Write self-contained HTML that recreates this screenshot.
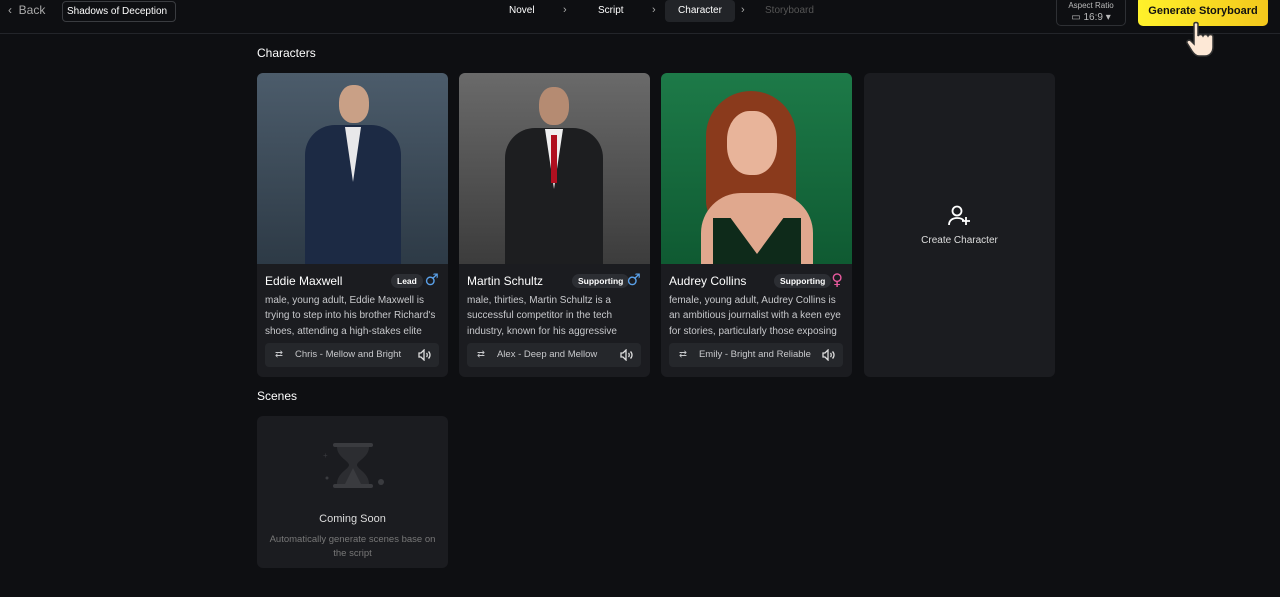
<!DOCTYPE html>
<html><head><meta charset="utf-8"><style>
*{margin:0;padding:0;box-sizing:border-box}
body{width:1280px;height:597px;background:#0e0f12;font-family:"Liberation Sans",sans-serif;color:#fff;position:relative;overflow:hidden}
.top{position:absolute;left:0;top:0;width:1280px;height:34px;border-bottom:1px solid #23252a}
.abs{position:absolute}
.card{position:absolute;top:73px;width:191px;height:304px;background:#1b1c20;border-radius:6px;overflow:hidden}
.img{height:191px;position:relative;overflow:hidden}
.name{position:absolute;left:8px;top:201px;font-size:12px}
.badge{position:absolute;top:201px;height:14px;line-height:14px;font-size:8.5px;font-weight:bold;background:#2c2e33;border-radius:7px;padding:0 6px}
.sex{position:absolute;right:9px;top:197px;font-size:16px;font-family:"DejaVu Sans",sans-serif}
.desc{position:absolute;left:8px;top:220px;width:176px;font-size:10px;line-height:15.3px;color:#c8c9cc}
.voice{position:absolute;left:8px;top:270px;width:174px;height:24px;background:#25272b;border-radius:4px;font-size:9.5px;color:#c8c9cc;line-height:24px}
.spk{position:absolute;right:8px;top:6px}
</style></head><body>
<div class="top"></div>
<div class="abs" style="left:8px;top:3px;font-size:12px;color:#aaa">‹&nbsp; Back</div>
<div class="abs" style="left:62px;top:1px;width:114px;height:21px;border:1px solid #3a3c40;border-radius:4px;font-size:10px;line-height:20px;padding-left:4px">Shadows of Deception</div>
<div class="abs" style="left:509px;top:5px;font-size:10px">Novel</div>
<div class="abs" style="left:563px;top:4px;font-size:11px;color:#aaa">›</div>
<div class="abs" style="left:598px;top:5px;font-size:10px">Script</div>
<div class="abs" style="left:652px;top:4px;font-size:11px;color:#aaa">›</div>
<div class="abs" style="left:665px;top:0;width:70px;height:22px;background:#222428;border-radius:4px;font-size:10px;text-align:center;line-height:21px">Character</div>
<div class="abs" style="left:741px;top:4px;font-size:11px;color:#aaa">›</div>
<div class="abs" style="left:765px;top:5px;font-size:10px;color:#555">Storyboard</div>
<div class="abs" style="left:1056px;top:-4px;width:70px;height:30px;border:1px solid #2e3034;border-radius:5px;text-align:center;font-size:8px;color:#bbb;line-height:12px;padding-top:3px">Aspect Ratio<br><span style="font-size:10px">▭ 16:9 ▾</span></div>
<div class="abs" style="left:1138px;top:-4px;width:130px;height:30px;background:linear-gradient(90deg,#fff12b,#f3c71c);border-radius:5px;color:#111;font-weight:bold;font-size:11px;text-align:center;line-height:30px;padding-top:0">Generate Storyboard</div>
<svg class="abs" style="left:1184px;top:20px" width="40" height="40" viewBox="0 0 40 40"><path d="M10 4c0-2 4-2 4 0v12c1-2 4-2 5 0 1-2 4-2 5 0 1-2 5-2 5 1v10c0 5-3 9-8 9h-6c-3 0-5-2-7-5l-5-8c-1-2 2-4 4-2l3 3z" fill="#fde8d6" stroke="#333" stroke-width="1.5"/></svg>
<div class="abs" style="left:257px;top:46px;font-size:12px">Characters</div>

<div class="card" style="left:257px"><div class="img" style="background:linear-gradient(#4c5c6b,#2d3a46)">
<div class="abs" style="left:82px;top:12px;width:30px;height:38px;border-radius:45%;background:#c9a086"></div>
<div class="abs" style="left:48px;top:52px;width:96px;height:160px;border-radius:30px 30px 0 0;background:#1c2a44"></div>
<div class="abs" style="left:88px;top:54px;width:16px;height:55px;background:#e8e8ea;clip-path:polygon(0 0,100% 0,50% 100%)"></div></div>
<div class="name">Eddie Maxwell</div><div class="badge" style="left:134px">Lead</div><div class="sex" style="color:#5aa0e8">♂</div>
<div class="desc">male, young adult, Eddie Maxwell is trying to step into his brother Richard's shoes, attending a high-stakes elite</div>
<div class="voice"><span style="padding:0 12px 0 10px">⇄</span>Chris - Mellow and Bright<svg class="spk" width="13" height="12" viewBox="0 0 13 12" fill="none" stroke="#ddd" stroke-width="1.3"><path d="M1 4h2l3-3v10l-3-3H1z"/><path d="M8.5 4c1 1 1 3 0 4M10.5 2.5c2 2 2 5 0 7"/></svg></div></div>

<div class="card" style="left:459px"><div class="img" style="background:linear-gradient(#6a6a6a,#3c3c3c)">
<div class="abs" style="left:80px;top:14px;width:30px;height:38px;border-radius:45%;background:#b58b72"></div>
<div class="abs" style="left:46px;top:55px;width:98px;height:160px;border-radius:30px 30px 0 0;background:#1d1e20"></div>
<div class="abs" style="left:86px;top:56px;width:18px;height:60px;background:#f0f0f0;clip-path:polygon(0 0,100% 0,50% 100%)"></div>
<div class="abs" style="left:92px;top:62px;width:6px;height:48px;background:#b01020"></div></div>
<div class="name">Martin Schultz</div><div class="badge" style="left:113px">Supporting</div><div class="sex" style="color:#5aa0e8">♂</div>
<div class="desc">male, thirties, Martin Schultz is a successful competitor in the tech industry, known for his aggressive</div>
<div class="voice"><span style="padding:0 12px 0 10px">⇄</span>Alex - Deep and Mellow<svg class="spk" width="13" height="12" viewBox="0 0 13 12" fill="none" stroke="#ddd" stroke-width="1.3"><path d="M1 4h2l3-3v10l-3-3H1z"/><path d="M8.5 4c1 1 1 3 0 4M10.5 2.5c2 2 2 5 0 7"/></svg></div></div>

<div class="card" style="left:661px"><div class="img" style="background:linear-gradient(#1d7a48,#0f5a32)">
<div class="abs" style="left:45px;top:18px;width:90px;height:140px;border-radius:45px 45px 30px 30px;background:#8a3a1c"></div>
<div class="abs" style="left:66px;top:38px;width:50px;height:64px;border-radius:45%;background:#e8b49a"></div>
<div class="abs" style="left:40px;top:120px;width:112px;height:80px;border-radius:40px 40px 0 0;background:#e0a88e"></div>
<div class="abs" style="left:52px;top:145px;width:88px;height:60px;background:#0e2a1a;clip-path:polygon(0 0,20% 0,50% 60%,80% 0,100% 0,100% 100%,0 100%)"></div></div>
<div class="name">Audrey Collins</div><div class="badge" style="left:113px">Supporting</div><div class="sex" style="color:#e85a9e">♀</div>
<div class="desc">female, young adult, Audrey Collins is an ambitious journalist with a keen eye for stories, particularly those exposing</div>
<div class="voice"><span style="padding:0 12px 0 10px">⇄</span>Emily - Bright and Reliable<svg class="spk" width="13" height="12" viewBox="0 0 13 12" fill="none" stroke="#ddd" stroke-width="1.3"><path d="M1 4h2l3-3v10l-3-3H1z"/><path d="M8.5 4c1 1 1 3 0 4M10.5 2.5c2 2 2 5 0 7"/></svg></div></div>

<div class="card" style="left:864px">
<svg class="abs" style="left:84px;top:132px" width="24" height="22" viewBox="0 0 24 22" fill="none" stroke="#fff" stroke-width="1.8"><circle cx="9" cy="6" r="4.5"/><path d="M1 20c0-5 4-7 8-7s6 1 7 3M18 12v8M14 16h8"/></svg>
<div class="abs" style="left:0;width:191px;top:162px;text-align:center;font-size:10px;color:#ddd">Create Character</div></div>

<div class="abs" style="left:257px;top:389px;font-size:12px">Scenes</div>
<div class="abs" style="left:257px;top:416px;width:191px;height:152px;background:#1b1c20;border-radius:6px">
<svg class="abs" style="left:66px;top:24px" width="62" height="52" viewBox="0 0 62 52"><rect x="10" y="3" width="40" height="4" rx="2" fill="#3a3b3f"/><rect x="10" y="44" width="40" height="4" rx="2" fill="#3a3b3f"/><path d="M14 7h32c0 10-12 14-12 18s12 8 12 19H14c0-11 12-15 12-19S14 17 14 7z" fill="#2c2d31"/><path d="M22 44l8-16 8 16z" fill="#3a3b3f"/><circle cx="58" cy="42" r="3" fill="#3a3b3f"/><circle cx="4" cy="38" r="1.5" fill="#3a3b3f"/><text x="0" y="18" fill="#3a3b3f" font-size="8">+</text></svg>
<div class="abs" style="left:0;width:191px;top:97px;text-align:center;font-size:11px;color:#ddd">Coming Soon</div>
<div class="abs" style="left:6px;width:179px;top:117px;text-align:center;font-size:9.5px;line-height:14px;color:#777">Automatically generate scenes base on the script</div></div>
</body></html>
